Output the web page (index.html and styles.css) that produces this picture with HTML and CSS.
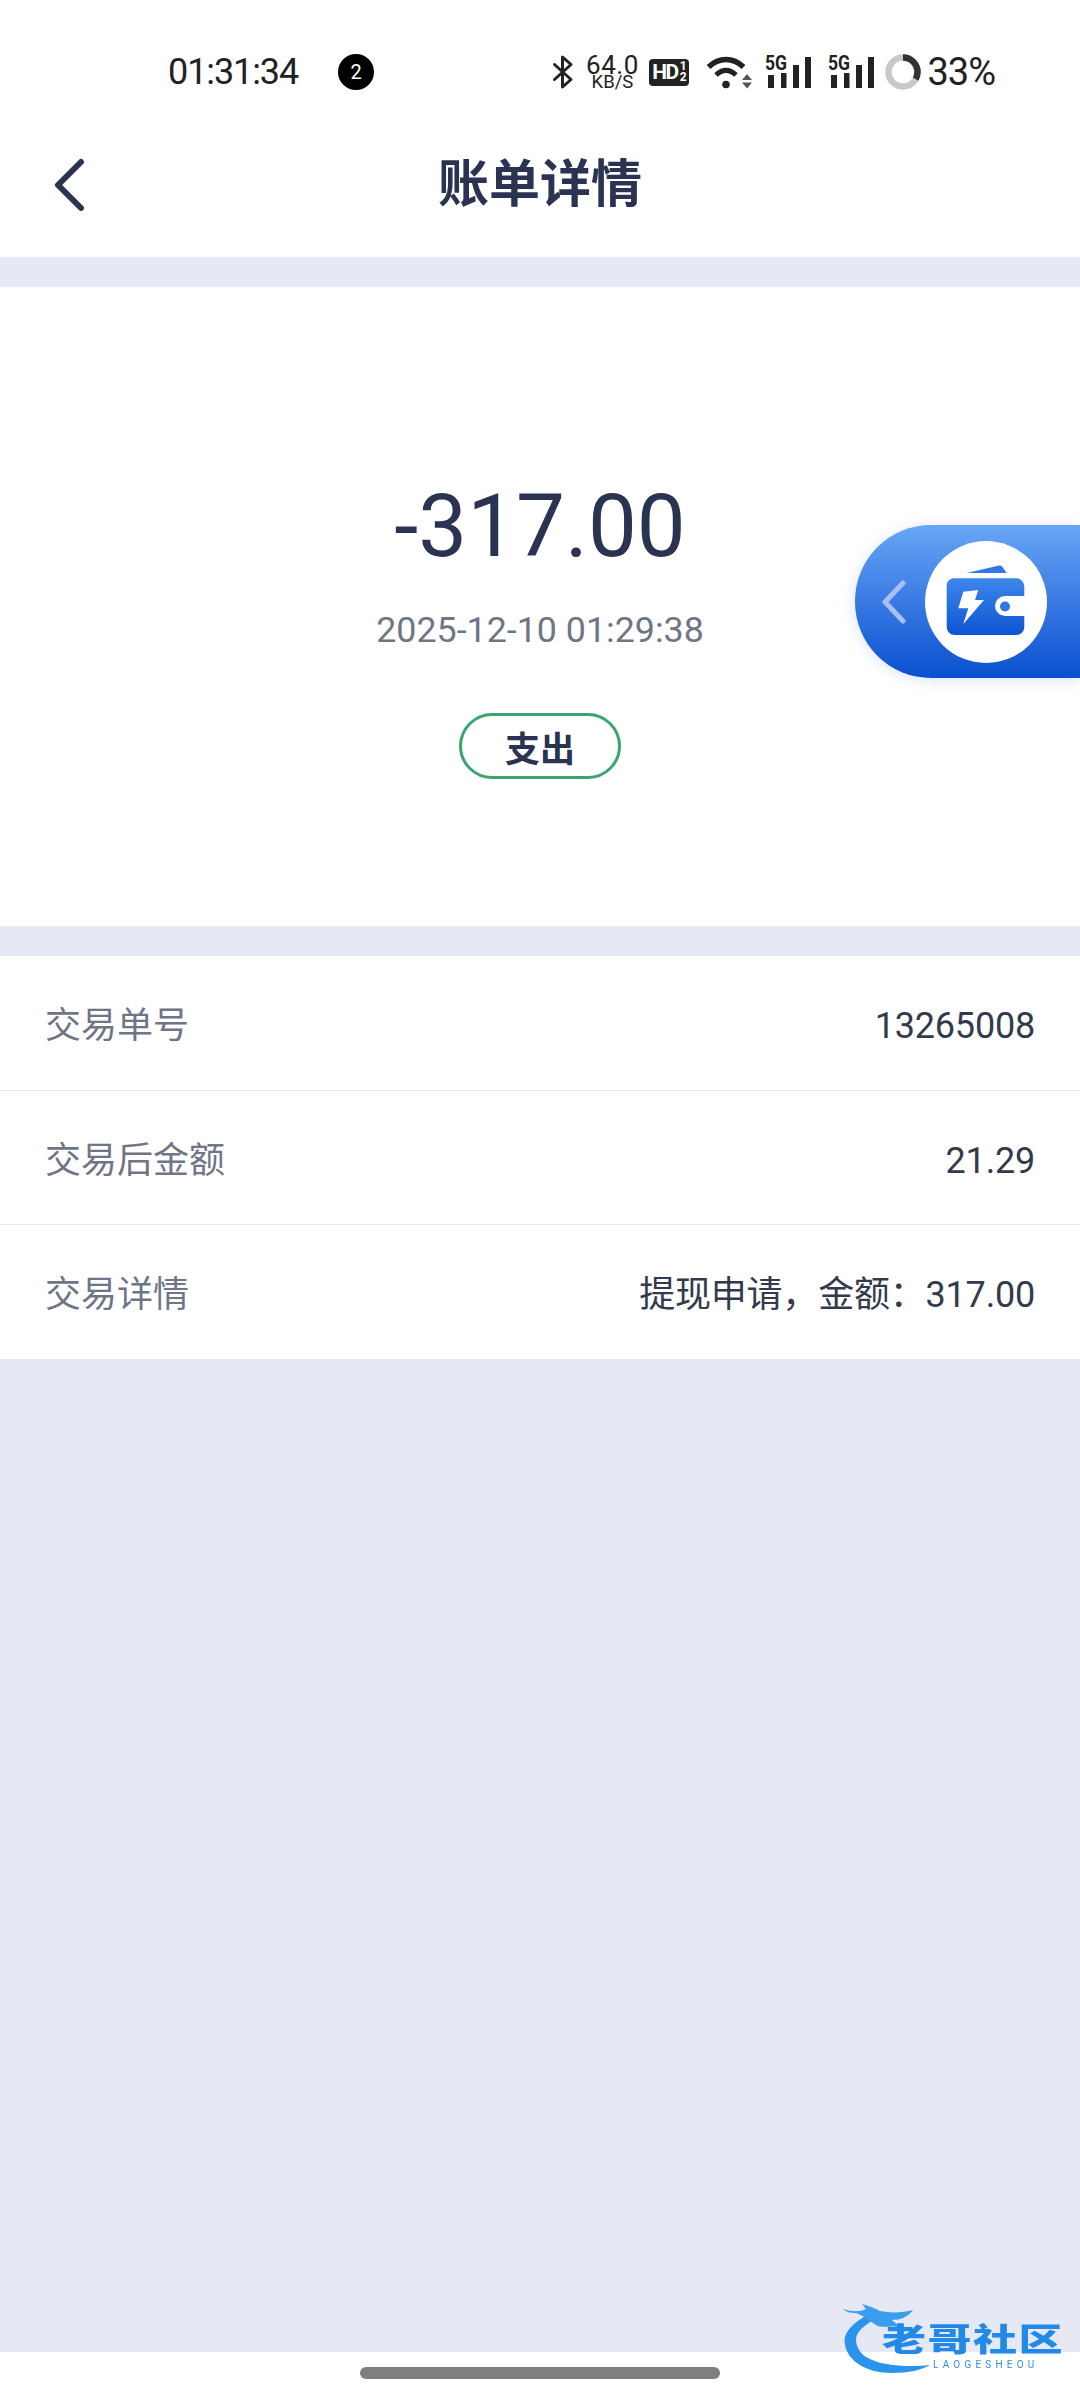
FILE: index.html
```html
<!DOCTYPE html>
<html lang="zh-CN">
<head>
    <meta charset="UTF-8">
    <title>账单详情</title>
    <link rel="stylesheet" href="styles.css">
</head>
<body>
<div class="page">
    <div class="status-bar">
        <span class="clock">01:31:34</span>
        <span class="notify-badge">2</span>
        <div class="status-icons">
            <svg class="ic-bt" width="20" height="34" viewBox="0 0 20 34">
                <path d="M1.500 9.500L18 24.500 9.500 32V2L18 9.500 1.500 24.500" fill="none" stroke="#222" stroke-width="3" stroke-linejoin="round" stroke-linecap="round"/>
            </svg>
            <div class="net-speed"><span class="speed-num">64.0</span><span class="speed-unit">KB/S</span></div>
            <div class="hd-tag">HD<span class="hd-frac"><i>1</i><i>2</i></span></div>
            <svg class="ic-wifi" width="46" height="34" viewBox="0 0 46 34">
                <path d="M1.500 12C12 2 26 2 36.500 12" fill="none" stroke="#222" stroke-width="5.500"/>
                <path d="M9 20c6.500-6 13.500-6 20 0" fill="none" stroke="#222" stroke-width="5"/>
                <circle cx="19" cy="29.500" r="3.800" fill="#222"/>
                <path d="M35 25l5-6 5 6zM35 27.500l5 6 5-6z" fill="#555"/>
            </svg>
            <svg class="ic-signal" width="46" height="32" viewBox="0 0 46 32">
                <text x="0" y="14" class="sig-label" textLength="22" lengthAdjust="spacingAndGlyphs">5G</text>
                <path d="M3 19h6v13H3zM16 17h5.500v15H16zM28 9h6v23h-6zM40 1h6v31h-6z" fill="#222"/>
            </svg>
            <svg class="ic-signal sig-second" width="46" height="32" viewBox="0 0 46 32">
                <text x="0" y="14" class="sig-label" textLength="22" lengthAdjust="spacingAndGlyphs">5G</text>
                <path d="M3 19h6v13H3zM16 17h5.500v15H16zM28 9h6v23h-6zM40 1h6v31h-6z" fill="#222"/>
            </svg>
            <svg class="ic-batt" width="36" height="36" viewBox="0 0 36 36">
                <circle cx="18" cy="18" r="14.500" fill="none" stroke="#c9c9c9" stroke-width="6.500"/>
                <circle cx="18" cy="18" r="14.500" fill="none" stroke="#333" stroke-width="6.500" stroke-dasharray="30 91.100" transform="rotate(-90 18 18)"/>
            </svg>
            <span class="batt-pct">33%</span>
        </div>
    </div>

    <header class="top-nav">
        <svg class="back-arrow" width="34" height="54" viewBox="0 0 34 54">
            <path d="M29 4L6 27l23 23" fill="none" stroke="#2a3352" stroke-width="6" stroke-linecap="round" stroke-linejoin="round"/>
        </svg>
        <h1 class="nav-title">账单详情</h1>
    </header>

    <section class="summary">
        <div class="amount">-317.00</div>
        <div class="paid-at">2025-12-10 01:29:38</div>
        <div class="type-pill">支出</div>
    </section>

    <section class="detail-list">
        <div class="detail-row"><span class="detail-key">交易单号</span><span class="detail-val">13265008</span></div>
        <div class="detail-row"><span class="detail-key">交易后金额</span><span class="detail-val">21.29</span></div>
        <div class="detail-row"><span class="detail-key">交易详情</span><span class="detail-val">提现申请，金额：317.00</span></div>
    </section>

    <div class="filler"></div>
    <div class="gesture-area"><span class="home-bar"></span></div>

    <!-- floating withdraw shortcut -->
    <div class="float-wallet">
        <svg class="float-arrow" width="26" height="44" viewBox="0 0 26 44">
            <path d="M22 3L4 22l18 19" fill="none" stroke="#a9bff2" stroke-width="5" stroke-linecap="round" stroke-linejoin="round"/>
        </svg>
        <div class="wallet-disc">
            <svg width="80" height="74" viewBox="0 0 80 74">
                <defs>
                    <linearGradient id="walletFill" x1="0" y1="0" x2="0" y2="1">
                        <stop offset="0" stop-color="#3f86ec"/>
                        <stop offset="1" stop-color="#0c55d2"/>
                    </linearGradient>
                </defs>
                <path d="M20.700 8L52 .8c2.500-.6 4 .2 5 2L60.700 8z" fill="#2f78e6"/>
                <path d="M8 13.300h62.300a8 8 0 0 1 8 8V62a8 8 0 0 1-8 8H8.700a8 8 0 0 1-8-8V20.500a7.200 7.200 0 0 1 7.300-7.200z" fill="url(#walletFill)"/>
                <path d="M80 31H59a10 10 0 0 0 0 20h21z" fill="#fff"/>
                <circle cx="59" cy="41.500" r="5" fill="#2f78e6"/>
                <path d="M17.300 26.700L32.300 25 29 35h9L17.300 59l5-15.700h-10z" fill="#fff"/>
            </svg>
        </div>
    </div>

    <!-- community watermark -->
    <div class="site-mark">
        <svg class="site-dragon" width="100" height="74" viewBox="0 0 100 74">
            <path d="M30 10C12 18 0 30 3 42c3 16 21 28 47 28 16 0 30-3 38-8-18 2-48 2-64-8-10-7-12-18-8-24 4-6 10-10 16-13z" fill="#2a93ea"/>
            <path d="M1 6c9 3 17 3 23 0l-4-5c8 2 14 5 18 7 10 2 22 2 33-1-5 7-13 10-21 10l8 7c-10-2-18 2-24-2-6-4-14-10-20-12-6 0-10-1-13-4z" fill="#3a9dee"/>
        </svg>
        <div class="site-name">老哥社区</div>
        <div class="site-sub">LAOGESHEOU</div>
    </div>
</div>
</body>
</html>
```

FILE: styles.css
```css
* { box-sizing: border-box; }
html, body { margin: 0; padding: 0; }
body { font-family: Roboto, "Noto Sans CJK SC", sans-serif; background: #fff; }

.page { position: relative; width: 1080px; height: 2400px; display: flex; flex-direction: column; overflow: hidden; background: #e6e9f3; }

/* status bar */
.status-bar { height: 144px; padding: 0 85px 0 168px; background: #fff; display: flex; align-items: center; color: #222; }
.clock { font-size: 36px; letter-spacing: -1.1px; width: 170px; }
.notify-badge { width: 36px; height: 36px; border-radius: 50%; background: #000; color: #fff; font-size: 20px; display: flex; align-items: center; justify-content: center; }
.status-icons { margin-left: auto; display: flex; align-items: center; }
.status-icons svg { overflow: visible; flex: none; }
.ic-bt { margin-right: 14px; }
.net-speed { width: 50px; display: flex; flex-direction: column; align-items: center; margin-right: 12px; line-height: 1; }
.speed-num { font-size: 26px; height: 20px; line-height: 20px; letter-spacing: 0.5px; }
.speed-unit { font-size: 18.5px; line-height: 14px; }
.hd-tag { width: 40px; height: 27px; border-radius: 4px; background: #222; color: #fff; font-size: 21px; font-weight: 700; letter-spacing: -1.5px; display: flex; align-items: center; justify-content: center; margin-right: 18px; }
.hd-frac { display: flex; flex-direction: column; font-size: 12px; line-height: 11px; margin-left: 2px; letter-spacing: 0; }
.hd-frac i { font-style: normal; }
.ic-wifi { margin-right: 12px; }
.sig-label { font-size: 20px; font-weight: 700; fill: #222; font-family: Roboto, sans-serif; }
.sig-second { margin-left: 17px; }
.ic-batt { margin-left: 11px; margin-right: 6px; }
.batt-pct { font-size: 38px; letter-spacing: -1px; }

/* title row */
.top-nav { height: 113px; padding-bottom: 32px; background: #fff; display: grid; grid-template-columns: 1fr auto 1fr; align-items: center; }
.back-arrow { margin-left: 52px; }
.nav-title { margin: 0; font-size: 51px; font-weight: 700; color: #2a3352; line-height: 60px; }

/* amount block */
.summary { margin-top: 30px; height: 639px; background: #fff; display: flex; flex-direction: column; align-items: center; padding-top: 189px; }
.amount { font-size: 87px; line-height: 100px; color: #2a3352; }
.paid-at { margin-top: 32px; font-size: 35.8px; line-height: 44px; color: #6f7585; }
.type-pill { margin-top: 61px; width: 162px; height: 66px; border: 3px solid #3aa56f; border-radius: 33px; font-size: 35px; font-weight: 700; color: #2a3352; display: flex; align-items: center; justify-content: center; }

/* detail rows */
.detail-list { margin-top: 30px; background: #fff; }
.detail-row { height: 134px; padding: 6px 45px 0; display: flex; align-items: center; justify-content: space-between; font-size: 36px; line-height: 44px; }
.detail-row + .detail-row { border-top: 1px solid #e8e9ee; }
.detail-row:last-child { height: 135px; }
.detail-key { color: #6f7585; }
.detail-val { color: #333a4d; letter-spacing: -0.2px; }

.filler { flex: 1; }
.gesture-area { height: 48px; background: #fff; display: flex; justify-content: center; padding-top: 15px; }
.home-bar { width: 360px; height: 12px; border-radius: 6px; background: #7f7f7f; }

/* floating wallet button */
.float-wallet { position: absolute; left: 855px; top: 525px; width: 225px; height: 153px; border-radius: 76px 0 0 76px; background: linear-gradient(#68a6f6, #0a4fd0); box-shadow: 0 2px 14px rgba(40, 100, 220, 0.18); display: flex; align-items: center; padding-left: 26px; }
.float-arrow { flex: none; }
.wallet-disc { width: 122px; height: 122px; margin-left: 18px; border-radius: 50%; background: #fff; display: flex; align-items: center; justify-content: center; }

/* watermark */
.site-mark { position: absolute; left: 840px; top: 2303px; width: 240px; height: 80px; filter: blur(0.7px); }
.site-dragon { position: absolute; left: 2px; top: 0; }
.site-name { position: absolute; left: 42px; top: 22px; font-size: 44px; line-height: 30px; font-weight: 900; letter-spacing: 1.500px; color: #2189e8; white-space: nowrap; transform: scaleY(0.72); transform-origin: left center; }
.site-sub { position: absolute; left: 93px; top: 56px; font-size: 10px; line-height: 12px; letter-spacing: 4.200px; color: #3a8fd8; white-space: nowrap; }
```
